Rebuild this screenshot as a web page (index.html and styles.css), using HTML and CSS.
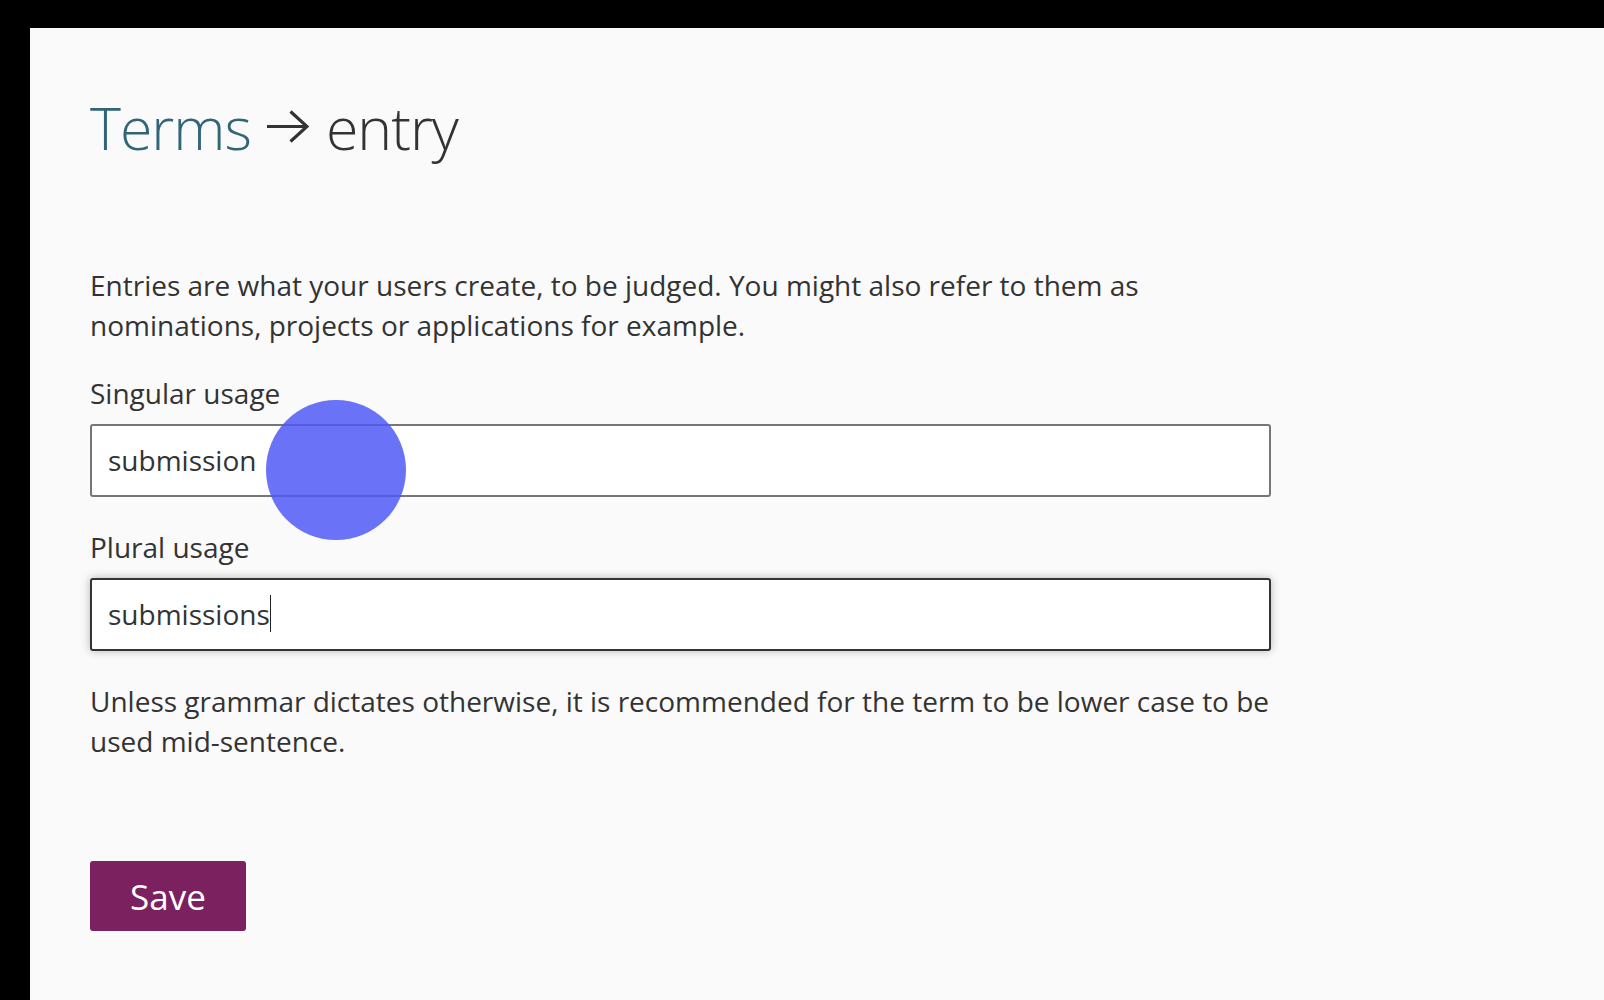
FILE: index.html
```html
<!DOCTYPE html>
<html lang="en">
<head>
    <meta charset="UTF-8">
    <meta name="viewport" content="width=device-width, initial-scale=1.0">
    <title>Terms - entry</title>
    <link rel="stylesheet" href="styles.css">
</head>
<body>

    <div class="panel">
        <h1 class="title"><a href="#" class="crumb">Terms</a><svg class="arrow" width="42" height="34" viewBox="0 0 42 34" aria-hidden="true"><path d="M0 16.5H40M23.5 1.5L40 16.5L23.5 31.5" fill="none" stroke="#333" stroke-width="3.2"/></svg><span>entry</span></h1>

        <div class="term-form">
            <p class="intro">Entries are what your users create, to be judged. You might also refer to them as nominations, projects or applications for example.</p>

            <!-- Singular -->
            <div class="field">
                <label class="field-label">Singular usage</label>
                <div class="field-box">
                    <div class="field-input">submission</div>
                    <span class="touch"></span>
                </div>
            </div>

            <!-- Plural (currently focused) -->
            <div class="field">
                <label class="field-label">Plural usage</label>
                <div class="field-box">
                    <div class="field-input focused">submissions<span class="caret"></span></div>
                </div>
            </div>

            <p class="hint">Unless grammar dictates otherwise, it is recommended for the term to be lower case to be used mid-sentence.</p>

            <button class="save-btn">Save</button>
        </div>
    </div>

</body>
</html>
```

FILE: styles.css
```css
html, body {
    margin: 0;
    height: 100%;
}
body {
    background: #000;
    font-family: "Open Sans", "Noto Sans", sans-serif;
    color: #333;
    padding: 28px 0 0 30px;
    box-sizing: border-box;
}
.panel {
    background: #fafafa;
    min-height: 100%;
    padding: 62px 60px 0 60px;
    box-sizing: border-box;
}
.title {
    margin: 0;
    font-size: 59px;
    font-weight: 300;
    letter-spacing: -1px;
    line-height: 74px;
    color: #333;
}
.crumb {
    color: #316577;
    text-decoration: none;
}
.arrow {
    margin: 0 17px 0 16px;
    vertical-align: 6px;
}
.term-form {
    width: 1181px;
    margin-top: 101px;
    font-size: 28px;
    line-height: 40px;
}
.intro, .hint {
    margin: 0;
}
.field {
    margin-top: 28px;
}
.field + .field {
    margin-top: 30px;
}
.field-label {
    display: block;
    margin-bottom: 11px;
}
/* wrapper so the touch marker can sit over the input */
.field-box {
    position: relative;
}
.field-input {
    height: 73px;
    line-height: 69px;
    padding: 0 16px;
    box-sizing: border-box;
    background: #fff;
    border: 2px solid #767676;
    border-radius: 3px;
}
.field-input.focused {
    border-color: #333;
    box-shadow: 0 0 10px rgba(0, 0, 0, 0.28);
}
.caret {
    display: inline-block;
    width: 1.5px;
    height: 37px;
    background: #222;
    vertical-align: -7px;
}
.touch {
    position: absolute;
    left: 176px;
    top: -24px;
    width: 140px;
    height: 140px;
    border-radius: 50%;
    background: rgba(78, 88, 246, 0.84);
}
.hint {
    margin-top: 30px;
}
.save-btn {
    margin-top: 100px;
    width: 156px;
    height: 70px;
    border: none;
    border-radius: 3px;
    background: #7b2160;
    color: #fff;
    font-family: "Open Sans", "Noto Sans", sans-serif;
    font-size: 35px;
    padding: 0;
}
```
